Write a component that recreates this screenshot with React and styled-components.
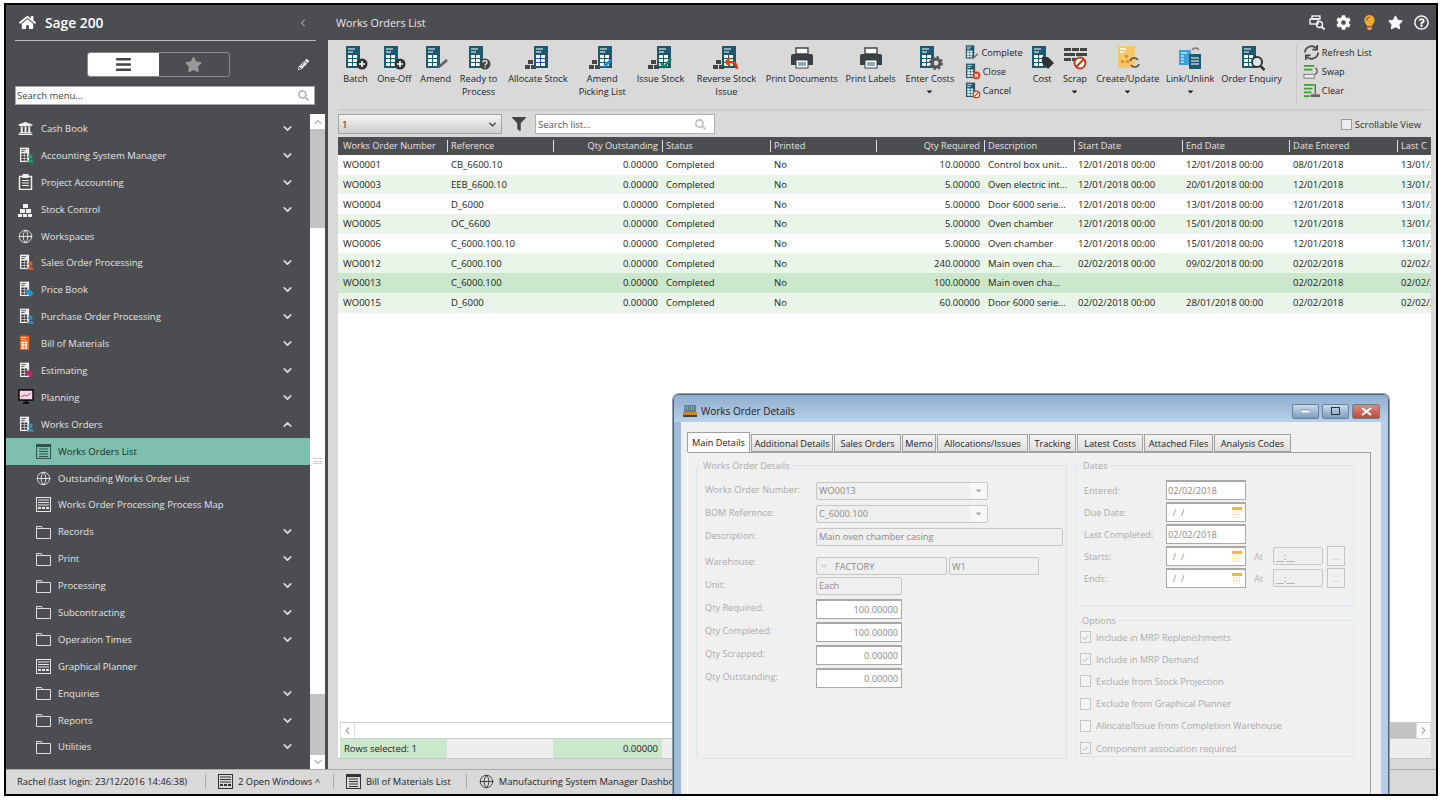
import React from "react";
import styled, { createGlobalStyle } from "styled-components";
import { ChevronDown, ChevronUp, ChevronLeft, ChevronRight, Globe, Check } from "lucide-react";
import { FaHome, FaBars, FaStar, FaPencilAlt, FaSearch, FaFilter, FaCog, FaLightbulb, FaRegQuestionCircle, FaUniversity, FaCaretDown } from "react-icons/fa";

const GlobalStyle = createGlobalStyle`
	html, body {
		margin: 0;
		padding: 0;
		background: #fff;
	}
	* {
		box-sizing: border-box;
	}
	body {
		font-family: "Open Sans", "Liberation Sans", sans-serif;
		font-size: 9.5px;
		overflow: hidden;
	}
`;

const Frame = styled.div`
	position: relative;
	width: 1434px;
	height: 793px;
	margin: 3px 0 0 4px;
	border: 2px solid #000;
	overflow: hidden;
	display: flex;
	flex-direction: column;
	background: #d9d9d9;
`;

const Upper = styled.div`
	display: flex;
	height: 764px;
`;

/* ---------- icons ---------- */

const Badge = ({ type }) => {
	switch (type) {
		case "plus":
			return (
				<g>
					<circle cx="19" cy="19" r="5.5" fill="#333" />
					<path d="M19 16v6M16 19h6" stroke="#fff" strokeWidth="1.6" />
				</g>
			);
		case "pencil":
			return <path d="M15 23l1-3 7-6 2 2-7 6z" fill="#666" />;
		case "question":
			return (
				<g>
					<circle cx="19" cy="19" r="5.5" fill="#444" />
					<path d="M17 17.5c0-2.4 4-2.4 4 0 0 1.6-2 1.4-2 3M19 21.5v1.3" stroke="#fff" strokeWidth="1.2" fill="none" />
				</g>
			);
		case "gear":
			return (
				<g>
					<circle cx="19" cy="18" r="4" fill="none" stroke="#555" strokeWidth="3" />
					<circle cx="19" cy="18" r="6" fill="none" stroke="#555" strokeWidth="2" strokeDasharray="2.4 2.3" />
				</g>
			);
		case "tag":
			return <path d="M13 12h6l6 6-6 6-6-6z" fill="#333" />;
		case "x":
			return (
				<g>
					<circle cx="19" cy="19" r="6" fill="#d9431e" />
					<path d="M16.5 16.5l5 5M21.5 16.5l-5 5" stroke="#fff" strokeWidth="1.6" />
				</g>
			);
		case "no":
			return (
				<g>
					<circle cx="19" cy="19" r="5" fill="#fff" stroke="#d9431e" strokeWidth="2" />
					<path d="M15.5 22.5l7-7" stroke="#d9431e" strokeWidth="2" />
				</g>
			);
		case "check":
			return <path d="M13 19l3 3 7-7" fill="none" stroke="#666" strokeWidth="2" />;
		case "lens":
			return (
				<g>
					<circle cx="18" cy="17" r="5" fill="#dfe8ec" stroke="#333" strokeWidth="2" />
					<path d="M21.5 21l4 4" stroke="#333" strokeWidth="2.5" />
				</g>
			);
		default:
			return null;
	}
};

const Stock = ({ fill = "#444" }) => (
	<g fill={fill}>
		<rect x="0" y="20" width="5" height="4" />
		<rect x="6" y="20" width="5" height="4" />
		<rect x="3" y="15" width="5" height="4" />
	</g>
);

const Sheet = ({ badge, stock, extra, size = 26, page = "#1c5a73", cell = "#fff" }) => {
	const left = stock ? 9 : 3;
	return (
		<svg width={size} height={size} viewBox="0 0 26 26">
			{stock && <Stock />}
			<rect x={left} y="1" width="14" height="22" fill={page} />
			<path d={`M${left + 2} 4h7M${left + 2} 7h5`} stroke={cell} strokeWidth="1.2" />
			{[11, 15, 19].map((y) =>
				[2, 7].map((x) => <rect key={`${x}${y}`} x={left + x} y={y - 1} width="4" height="3" fill={cell} />)
			)}
			<Badge type={badge} />
			{extra}
		</svg>
	);
};

const Printer = () => (
	<svg width="26" height="26" viewBox="0 0 26 26">
		<path d="M7 3h12v6H7z" fill="#fff" stroke="#444" strokeWidth="1.4" />
		<path d="M2 11a2 2 0 012-2h18a2 2 0 012 2v9H2z" fill="#3a4046" />
		<rect x="7" y="15" width="12" height="8" fill="#fff" stroke="#3a4046" />
		<path d="M9 18h8M9 20h8" stroke="#1c5a73" strokeWidth="1.2" />
	</svg>
);

const ScrapIcon = () => (
	<svg width="26" height="26" viewBox="0 0 26 26">
		<g fill="#444">
			<rect x="2" y="3" width="7" height="3" />
			<rect x="10" y="3" width="7" height="3" />
			<rect x="18" y="3" width="7" height="3" />
			<rect x="2" y="8" width="11" height="3" />
			<rect x="14" y="8" width="11" height="3" />
			<rect x="2" y="13" width="7" height="3" />
			<rect x="10" y="13" width="7" height="3" />
		</g>
		<circle cx="18" cy="18" r="5.5" fill="#fff" stroke="#c8381a" strokeWidth="2" />
		<path d="M14 22l8-8" stroke="#c8381a" strokeWidth="2" />
	</svg>
);

const CreateIcon = () => (
	<svg width="26" height="26" viewBox="0 0 26 26">
		<rect x="3" y="1" width="17" height="22" fill="#f7c766" />
		<path d="M5 4h6M5 7h4" stroke="#fff" strokeWidth="1.4" />
		<g fill="#e8912a">
			<rect x="10" y="10" width="3" height="3" />
			<rect x="6" y="15" width="3" height="3" />
			<rect x="11" y="15" width="3" height="3" />
		</g>
		<path d="M15 16a4.500 4.500 0 018-1M24 19a4.500 4.500 0 01-8 1" fill="none" stroke="#555" strokeWidth="1.6" />
	</svg>
);

const LinkIcon = () => (
	<svg width="26" height="26" viewBox="0 0 26 26">
		<rect x="2" y="5" width="12" height="15" fill="#3aa3dc" />
		<path d="M4 8h6M4 11h3M4 14h3M4 17h3" stroke="#fff" strokeWidth="1.2" />
		<rect x="12" y="9" width="12" height="15" fill="#1c5a73" />
		<path d="M14 13h8M14 16h8M14 19h8" stroke="#fff" strokeWidth="1.2" />
		<path d="M15 5a4 4 0 017 0" fill="none" stroke="#777" strokeWidth="1.4" />
	</svg>
);

const RefreshIcon = () => (
	<svg width="17" height="17" viewBox="0 0 18 18" fill="none" stroke="#444" strokeWidth="1.8">
		<path d="M2 9a7 7 0 0112-4.500M16 9a7 7 0 01-12 4.500" />
		<path d="M15 1v5h-5M3 17v-5h5" />
	</svg>
);

const SwapIcon = () => (
	<svg width="17" height="17" viewBox="0 0 18 18">
		<path d="M1 3h11M1 7h9" stroke="#3aa52b" strokeWidth="2" />
		<rect x="1" y="12" width="11" height="4" fill="#eee" stroke="#777" />
		<path d="M13 5a4 4 0 010 7" fill="none" stroke="#555" strokeWidth="1.4" />
	</svg>
);

const ClearIcon = () => (
	<svg width="17" height="17" viewBox="0 0 18 18">
		<path d="M1 3h11M1 7h9M1 11h8" stroke="#3aa52b" strokeWidth="2" />
		<path d="M13 2v11" stroke="#666" strokeWidth="1.5" />
		<rect x="8" y="13" width="10" height="3" fill="#666" />
		<path d="M1 15h6" stroke="#3aa52b" strokeWidth="2" />
	</svg>
);

const Folder = () => (
	<svg width="15" height="14" viewBox="0 0 15 14" fill="none" stroke="#ddd" strokeWidth="1">
		<path d="M.5 13.500V1.500h5l1 2h8v10z" />
		<path d="M.5 3.500h6" />
	</svg>
);

const Blocks = () => (
	<svg width="15" height="15" viewBox="0 0 15 15" fill="#f2f2f2">
		<rect x="5" y="2" width="5" height="4" />
		<rect x="2" y="7" width="5" height="4" />
		<rect x="8" y="7" width="5" height="4" />
		<rect x="0" y="12" width="4" height="3" />
		<rect x="5" y="12" width="4" height="3" />
		<rect x="10" y="12" width="4" height="3" />
	</svg>
);

const Clipboard = () => (
	<svg width="15" height="16" viewBox="0 0 15 16" fill="none" stroke="#eee">
		<rect x="1.500" y="2.500" width="12" height="13" strokeWidth="1.500" />
		<rect x="5" y=".5" width="5" height="3" fill="#eee" />
		<path d="M4 6.500h7M4 9h7M4 11.500h7" />
	</svg>
);

const Monitor = () => (
	<svg width="16" height="16" viewBox="0 0 16 16">
		<rect x="1" y="1" width="14" height="10" fill="#f6d9e4" stroke="#000" strokeWidth="1.4" />
		<path d="M3 8l3-2 3 1 4-3" stroke="#d0457f" fill="none" />
		<path d="M5 14h6M8 11v3" stroke="#000" strokeWidth="1.4" />
	</svg>
);

const PlannerIcon = ({ color = "#e6e6e6" }) => (
	<svg width="15" height="15" viewBox="0 0 15 15">
		<rect x=".5" y=".5" width="14" height="14" fill="none" stroke={color} />
		<path d="M2 3h11M2 5.500h11M2 8h11" stroke={color} />
		<path d="M2 11h3M6 11h3M10 11h3" stroke={color} strokeWidth="2" />
	</svg>
);

const ListIcon = ({ color = "#33524a" }) => (
	<svg width="15" height="15" viewBox="0 0 15 15">
		<rect x=".5" y=".5" width="14" height="14" fill="none" stroke={color} />
		<rect x="1" y="1" width="13" height="2" fill={color} />
		<path d="M3 5h9M3 7.500h9M3 10h9M3 12.500h9" stroke={color} />
	</svg>
);

const Person = ({ color }) => (
	<g fill={color}>
		<circle cx="19" cy="15" r="3.500" />
		<path d="M14 24c0-6 10-6 10 0z" />
	</g>
);

const TagMark = ({ color }) => <path d="M12 13h6l6 6-5 5-7-6z" fill={color} />;

const sideSheet = (extra) => <Sheet size={17} page="#eee" cell="#333" extra={extra} />;

const Calendar = () => (
	<svg width="10" height="11" viewBox="0 0 10 11">
		<rect x="0" y="0" width="10" height="3" fill="#f7b733" />
		<path d="M1 5h8M1 7.500h8M1 10h8" stroke="#f3cf8a" strokeDasharray="1.500 1.200" />
	</svg>
);

const WindowIcon = () => (
	<svg width="14" height="14" viewBox="0 0 14 14">
		<rect x="1" y="1" width="12" height="7" fill="#5a7f96" />
		<path d="M2 3h10M2 5h10" stroke="#9fd0c4" strokeDasharray="1 1" />
		<rect x="0" y="8" width="14" height="5" fill="#d0862a" />
		<rect x="0" y="11" width="14" height="2" fill="#444" />
	</svg>
);

/* ---------- sidebar ---------- */

const Sidebar = styled.aside`
	width: 322px;
	flex-shrink: 0;
	background: #4c4d51;
	display: flex;
	flex-direction: column;
	padding-right: 3px;
`;

const Brand = styled.div`
	height: 36px;
	margin: 0 9px;
	border-bottom: 1px solid #b9b9b9;
	display: flex;
	align-items: center;
	padding-left: 4px;
	color: #fff;
`;

const BrandName = styled.span`
	font-size: 13.8px;
	font-weight: 600;
	margin-left: 9px;
	flex: 1;
`;

const CollapseButton = styled.span`
	display: flex;
	margin-right: 7px;
	color: #ccc;
`;

const ViewRow = styled.div`
	display: flex;
	align-items: center;
	height: 26px;
	margin-top: 10px;
	padding-left: 81px;
`;

const ViewToggle = styled.div`
	width: 143px;
	height: 25px;
	display: flex;
	border: 1px solid #8a8a8a;
	border-radius: 3px;
	overflow: hidden;
`;

const ViewOption = styled.div`
	width: 71px;
	display: flex;
	align-items: center;
	justify-content: center;
	background: ${(p) => (p.$on ? "#fff" : "transparent")};
	color: ${(p) => (p.$on ? "#444" : "#999")};
	font-size: 17px;
`;

const EditButton = styled.div`
	margin-left: 68px;
	color: #e4e4e4;
	font-size: 11px;
	display: flex;
`;

const MenuSearch = styled.div`
	width: 300px;
	height: 19px;
	margin: 9px 0 0 9px;
	background: #fff;
	border: 1px solid #aaa;
	display: flex;
	align-items: center;
	justify-content: space-between;
	padding: 0 5px 0 1px;
	color: #444;
`;

const MenuWrap = styled.div`
	flex: 1;
	min-height: 0;
	display: flex;
	margin-top: 9px;
`;

const MenuList = styled.nav`
	width: 304px;
	overflow: hidden;
	padding-top: 1px;
`;

const MenuRow = styled.div`
	height: 26.9px;
	display: flex;
	align-items: center;
	padding-left: ${(p) => (p.$child ? "30px" : "12px")};
	color: ${(p) => (p.$active ? "#1d2b27" : "#e4e4e4")};
	background: ${(p) => (p.$active ? "#7fbfae" : "transparent")};
`;

const MenuIcon = styled.span`
	width: ${(p) => (p.$child ? "22px" : "23px")};
	display: flex;
	align-items: center;
	flex-shrink: 0;
`;

const MenuLabel = styled.span`
	flex: 1;
`;

const MenuChevron = styled.span`
	width: 29px;
	display: flex;
	color: #ddd;
`;

const SideScroll = styled.div`
	width: 15px;
	display: flex;
	flex-direction: column;
	background: #fff;
`;

const ScrollArrow = styled.div`
	height: ${(p) => p.$h}px;
	display: flex;
	align-items: center;
	justify-content: center;
	color: #bbb;
`;

const ScrollThumb = styled.div`
	height: ${(p) => p.$h}px;
	background: #c3c3c3;
`;

const ScrollTrack = styled.div`
	flex: 1;
	display: flex;
	align-items: center;
	justify-content: center;
`;

const Grip = styled.div`
	width: 9px;
	height: 6px;
	border-top: 1px solid #ccc;
	border-bottom: 1px solid #ccc;
	background: linear-gradient(#ccc, #ccc) center / 100% 1px no-repeat;
`;

const menu = [
	{ label: "Cash Book", icon: <FaUniversity size={15} color="#f2f2f2" />, chev: "down" },
	{ label: "Accounting System Manager", icon: sideSheet(<Person color="#1f9d6b" />), chev: "down" },
	{ label: "Project Accounting", icon: <Clipboard />, chev: "down" },
	{ label: "Stock Control", icon: <Blocks />, chev: "down" },
	{ label: "Workspaces", icon: <Globe size={15} color="#eee" strokeWidth={1.4} /> },
	{ label: "Sales Order Processing", icon: sideSheet(<Person color="#e8591c" />), chev: "down" },
	{ label: "Price Book", icon: sideSheet(<TagMark color="#1b9ad6" />), chev: "down" },
	{ label: "Purchase Order Processing", icon: sideSheet(<Person color="#2b8fd0" />), chev: "down" },
	{ label: "Bill of Materials", icon: <Sheet size={17} page="#ec6a2b" cell="#fff" />, chev: "down" },
	{ label: "Estimating", icon: sideSheet(<TagMark color="#c4256c" />), chev: "down" },
	{ label: "Planning", icon: <Monitor />, chev: "down" },
	{ label: "Works Orders", icon: sideSheet(<Person color="#3c8fb5" />), chev: "up" },
	{ label: "Works Orders List", icon: <ListIcon />, child: true, active: true },
	{ label: "Outstanding Works Order List", icon: <Globe size={15} color="#eee" strokeWidth={1.4} />, child: true },
	{ label: "Works Order Processing Process Map", icon: <PlannerIcon />, child: true },
	{ label: "Records", icon: <Folder />, child: true, chev: "down" },
	{ label: "Print", icon: <Folder />, child: true, chev: "down" },
	{ label: "Processing", icon: <Folder />, child: true, chev: "down" },
	{ label: "Subcontracting", icon: <Folder />, child: true, chev: "down" },
	{ label: "Operation Times", icon: <Folder />, child: true, chev: "down" },
	{ label: "Graphical Planner", icon: <PlannerIcon />, child: true },
	{ label: "Enquiries", icon: <Folder />, child: true, chev: "down" },
	{ label: "Reports", icon: <Folder />, child: true, chev: "down" },
	{ label: "Utilities", icon: <Folder />, child: true, chev: "down" },
];

/* ---------- main area ---------- */

const Main = styled.main`
	flex: 1;
	min-width: 0;
	display: flex;
	flex-direction: column;
`;

const TitleBar = styled.header`
	height: 35px;
	flex-shrink: 0;
	background: #4c4d51;
	color: #e8e8e8;
	display: flex;
	align-items: center;
	padding: 0 7px 0 8px;
	font-size: 10.8px;
`;

const TitleText = styled.div`
	flex: 1;
`;

const TitleIcons = styled.div`
	display: flex;
	align-items: center;
	gap: 11px;
	color: #fff;
	font-size: 15px;
`;

const Toolbar = styled.div`
	height: 71px;
	flex-shrink: 0;
	margin: 0 5px 0 10px;
	padding: 4px 0 0 5px;
	border-bottom: 2px solid #cdcdcd;
	display: flex;
	gap: 8.35px;
	color: #222;
	font-size: 9.2px;
`;

const ToolButton = styled.div`
	width: ${(p) => p.$w}px;
	flex-shrink: 0;
	display: flex;
	flex-direction: column;
	align-items: center;
	text-align: center;
	white-space: nowrap;
	line-height: 13px;
`;

const ToolIcon = styled.div`
	height: 27px;
	margin-bottom: 1px;
	display: flex;
	align-items: center;
`;

const ToolCaret = styled.div`
	font-size: 9px;
	margin-top: 2px;
	color: #222;
	display: flex;
`;

const ToolStack = styled.div`
	width: ${(p) => p.$w}px;
	flex-shrink: 0;
	display: flex;
	flex-direction: column;
	gap: 2px;
	border-left: ${(p) => (p.$divided ? "1px solid #c8c8c8" : "none")};
	padding-left: ${(p) => (p.$divided ? "6px" : "0")};
	margin-left: ${(p) => (p.$divided ? "6px" : "0")};
	height: 60px;
`;

const StackRow = styled.div`
	height: 17px;
	display: flex;
	align-items: center;
	gap: 2px;
	white-space: nowrap;
`;

const FilterRow = styled.div`
	height: 24px;
	margin: 1px 7px 0 10px;
	display: flex;
	align-items: center;
	flex-shrink: 0;
`;

const ListSelect = styled.div`
	width: 164px;
	height: 20px;
	border: 1px solid #a5a5a5;
	background: linear-gradient(#f4f4f4, #d0d0d0 90%);
	display: flex;
	align-items: center;
	justify-content: space-between;
	padding: 0 3px;
	color: #222;
`;

const FilterBtn = styled.div`
	width: 33px;
	display: flex;
	justify-content: center;
	font-size: 14px;
	color: #444;
`;

const ListSearch = styled.div`
	width: 180px;
	height: 20px;
	background: #fff;
	border: 1px solid #b0b0b0;
	display: flex;
	align-items: center;
	justify-content: space-between;
	padding: 0 8px 0 2px;
	color: #555;
`;

const ScrollableToggle = styled.label`
	margin-left: auto;
	margin-right: 8px;
	display: flex;
	align-items: center;
	gap: 3px;
	color: #333;
`;

const TinyBox = styled.span`
	width: 11px;
	height: 11px;
	border: 1px solid #999;
	background: #eee;
`;

const columns = "109px 106px 109px 108px 106px 108px 90px 108px 107px 108px 1fr";

const Table = styled.section`
	width: 1093px;
	height: 622px;
	margin: 1px 0 0 10px;
	background: #fff;
	display: flex;
	flex-direction: column;
	overflow: hidden;
	border-bottom: 1px solid #c4c4c4;
`;

const HeadRow = styled.div`
	height: 18px;
	flex-shrink: 0;
	display: grid;
	grid-template-columns: ${columns};
	background: #4c4d51;
	color: #e4e4e4;
	align-items: center;
	font-size: 9.2px;
`;

const HeadCell = styled.div`
	height: 12px;
	line-height: 12px;
	padding: 0 4px 0 ${(p) => (p.$first ? "5px" : "3px")};
	border-left: ${(p) => (p.$first ? "none" : "1px solid #ddd")};
	text-align: ${(p) => (p.$right ? "right" : "left")};
	white-space: nowrap;
	overflow: hidden;
`;

const BodyRow = styled.div`
	height: 19.7px;
	flex-shrink: 0;
	display: grid;
	grid-template-columns: ${columns};
	align-items: center;
	color: #222;
	background: ${(p) => (p.$selected ? "#cbe8cc" : p.$alt ? "#e8f5e8" : "#fff")};
`;

const BodyCell = styled.div`
	padding: 0 4px 0 ${(p) => (p.$first ? "5px" : "4px")};
	text-align: ${(p) => (p.$right ? "right" : "left")};
	white-space: nowrap;
	overflow: hidden;
`;

const TableSpace = styled.div`
	flex: 1;
`;

const HScroll = styled.div`
	height: 16px;
	flex-shrink: 0;
	margin-left: 2px;
	display: flex;
	align-items: stretch;
	border-top: 1px solid #ccc;
	color: #aaa;
`;

const HArrow = styled.div`
	width: 15px;
	display: flex;
	align-items: center;
	justify-content: center;
	border-right: 1px solid #ddd;
	border-left: 1px solid #ddd;
`;

const HTrack = styled.div`
	flex: 1;
	background: #fff;
`;

const HThumb = styled.div`
	width: 400px;
	background: #c3c3c3;
`;

const FootRow = styled.div`
	height: 20px;
	flex-shrink: 0;
	margin-left: 2px;
	display: grid;
	grid-template-columns: 107px 106px 109px 1fr;
	background: #eee;
	border-top: 1px solid #ccc;
	align-items: stretch;
	color: #222;
`;

const FootCell = styled.div`
	display: flex;
	align-items: center;
	justify-content: ${(p) => (p.$right ? "flex-end" : "flex-start")};
	padding: 0 4px;
	background: ${(p) => (p.$green ? "#cbe8cc" : "transparent")};
`;

/* ---------- status bar ---------- */

const StatusBar = styled.footer`
	height: 25px;
	flex-shrink: 0;
	background: #d9d9d9;
	border-top: 1px solid #aaa;
	display: flex;
	align-items: center;
	padding: 0 0 2px 11px;
	color: #222;
	white-space: nowrap;
	font-size: 9.4px;
`;

const StatusItem = styled.div`
	display: flex;
	align-items: center;
	gap: 5px;
	height: 15px;
	padding-right: ${(p) => p.$pr}px;
	margin-right: 12px;
	border-right: ${(p) => (p.$last ? "none" : "1px solid #aaa")};
`;

/* ---------- dialog ---------- */

const Dialog = styled.div`
	position: absolute;
	left: 667px;
	top: 389px;
	width: 716px;
	height: 412px;
	border: 1px solid #56606a;
	border-radius: 6px 6px 0 0;
	background: linear-gradient(90deg, #9dbbda, #c4d9ee 15%, #b5cde6 100%);
	padding: 0 7px;
	display: flex;
	flex-direction: column;
	box-shadow: 0 0 0 1px #8aa0b5;
`;

const DialogTitle = styled.div`
	height: 27px;
	flex-shrink: 0;
	margin: 0 -7px;
	padding: 5px 8px 0 9px;
	display: flex;
	align-items: center;
	gap: 4px;
	color: #222;
	font-size: 10px;
	background: linear-gradient(#8faed0, #b9d0e8);
	border-radius: 5px 5px 0 0;
`;

const DialogName = styled.div`
	flex: 1;
`;

const WinButtons = styled.div`
	display: flex;
	gap: 3px;
`;

const WinButton = styled.div`
	width: ${(p) => p.$w}px;
	height: 15px;
	border: 1px solid #6d7f92;
	border-radius: 2px;
	display: flex;
	align-items: center;
	justify-content: center;
	background: ${(p) =>
		p.$close ? "linear-gradient(#d98a7c, #bd4a37)" : "linear-gradient(#c9dbee, #7f9cbc)"};
`;

const Client = styled.div`
	flex: 1;
	background: #f0f0f0;
	padding: 11px 10px 0 6px;
	display: flex;
	flex-direction: column;
	min-height: 0;
	font-size: 9.2px;
`;

const Tabs = styled.div`
	display: flex;
	gap: 1px;
	height: 19px;
	flex-shrink: 0;
	position: relative;
	z-index: 1;
`;

const Tab = styled.div`
	width: ${(p) => p.$w}px;
	height: ${(p) => (p.$on ? "20px" : "18px")};
	margin-top: ${(p) => (p.$on ? "-1px" : "1px")};
	display: flex;
	align-items: center;
	justify-content: center;
	color: #222;
	white-space: nowrap;
	background: ${(p) => (p.$on ? "#fff" : "linear-gradient(#f4f4f4, #dedede)")};
	border: 1px solid #a0a0a0;
	border-bottom: ${(p) => (p.$on ? "none" : "1px solid #a0a0a0")};
`;

const TabPanel = styled.div`
	flex: 1;
	min-height: 0;
	border-top: 1px solid #a0a0a0;
	border-right: 1px solid #a0a0a0;
	border-left: 1px solid #fff;
	padding: 6px 0 0 8px;
	display: flex;
	gap: 8px;
	color: #aaa;
`;

const Col = styled.div`
	display: flex;
	flex-direction: column;
	width: ${(p) => p.$w}px;
	gap: ${(p) => p.$gap || 0}px;
`;

const Group = styled.fieldset`
	margin: 0;
	padding: ${(p) => p.$pad};
	height: ${(p) => p.$h}px;
	min-width: 0;
	border: 1px solid #dde5ec;
	border-radius: 3px;
`;

const GroupTitle = styled.legend`
	padding: 0 2px;
	margin-left: ${(p) => p.$ml}px;
	margin-bottom: ${(p) => p.$mb || 0}px;
	line-height: 13px;
	color: #aaa;
`;

const FormRow = styled.div`
	height: ${(p) => p.$h || 23}px;
	margin-top: ${(p) => p.$mt || 0}px;
	display: flex;
	align-items: center;
`;

const FormLabel = styled.div`
	width: ${(p) => p.$w}px;
	flex-shrink: 0;
	color: #ababab;
	margin-bottom: 3px;
`;

const DateLabel = styled(FormLabel)`
	margin-bottom: 0;
`;

const ReadBox = styled.div`
	width: ${(p) => p.$w}px;
	height: 18px;
	border: 1px solid #c6c6c6;
	border-radius: 2px;
	padding: 0 2px;
	display: flex;
	align-items: center;
	justify-content: space-between;
	color: #8a8a8a;
	background: #efefef;
	flex-shrink: 0;
`;

const WarehouseBox = styled(ReadBox)`
	margin: 7px 0 0 ${(p) => p.$gapLeft || 0}px;
`;

const WarehouseName = styled.span`
	flex: 1;
	padding-left: 6px;
`;

const ComboCaret = styled.span`
	width: 17px;
	align-self: stretch;
	display: flex;
	align-items: center;
	justify-content: center;
	background: #f7f7f7;
	color: #aaa;
	margin-right: -2px;
`;

const WhiteBox = styled.div`
	width: ${(p) => p.$w}px;
	height: 20px;
	background: #fff;
	border: 1px solid #a8a8a8;
	border-top-width: 2px;
	padding: 0 3px 0 1px;
	display: flex;
	align-items: center;
	justify-content: ${(p) => (p.$right ? "flex-end" : "space-between")};
	color: #8a8a8a;
	flex-shrink: 0;
`;

const AtLabel = styled.span`
	width: 27px;
	padding-left: 8px;
	color: #b5b5b5;
	flex-shrink: 0;
`;

const DotsBtn = styled.div`
	width: 24px;
	height: 20px;
	margin-left: 4px;
	border: 1px solid #c4c4c4;
	display: flex;
	align-items: center;
	justify-content: center;
	color: #bbb;
`;

const OptionRow = styled.div`
	height: 22.2px;
	display: flex;
	align-items: center;
	gap: 5px;
	color: #ababab;
`;

const OptionBox = styled.span`
	width: 11px;
	height: 12px;
	border: 1px solid #c6c6c6;
	background: #f4f4f4;
	display: flex;
	align-items: center;
	justify-content: center;
	color: #a0a0a0;
`;

/* ---------- data ---------- */

const tools = [
	{ w: 25, label: ["Batch"], icon: <Sheet badge="plus" /> },
	{ w: 36, label: ["One-Off"], icon: <Sheet badge="plus" /> },
	{ w: 30, label: ["Amend"], icon: <Sheet badge="pencil" /> },
	{ w: 39, label: ["Ready to", "Process"], icon: <Sheet badge="question" /> },
	{ w: 63, label: ["Allocate Stock"], icon: <Sheet stock /> },
	{ w: 49, label: ["Amend", "Picking List"], icon: <Sheet stock extra={<path d="M14 23l1-3 6-6 2 2-6 6z" fill="#1f8fd0" />} /> },
	{ w: 51, label: ["Issue Stock"], icon: <Sheet stock extra={<path d="M13 18l3 4 7-8" fill="none" stroke="#12855f" strokeWidth="2.400" />} /> },
	{ w: 64, label: ["Reverse Stock", "Issue"], icon: <Sheet stock extra={<path d="M24 24c0-6-3-7-10-7M17 13l-4 4 4 4" fill="none" stroke="#d9431e" strokeWidth="2.400" />} /> },
	{ w: 70, label: ["Print Documents"], icon: <Printer /> },
	{ w: 51, label: ["Print Labels"], icon: <Printer /> },
	{ w: 51, label: ["Enter Costs"], icon: <Sheet badge="gear" />, caret: true },
	{
		stack: true,
		w: 59,
		items: [
			{ label: "Complete", icon: <Sheet size={17} badge="check" /> },
			{ label: "Close", icon: <Sheet size={17} badge="x" /> },
			{ label: "Cancel", icon: <Sheet size={17} badge="no" /> },
		],
	},
	{ w: 22, label: ["Cost"], icon: <Sheet badge="tag" /> },
	{ w: 27, label: ["Scrap"], icon: <ScrapIcon />, caret: true },
	{ w: 62, label: ["Create/Update"], icon: <CreateIcon />, caret: true },
	{ w: 46, label: ["Link/Unlink"], icon: <LinkIcon />, caret: true },
	{ w: 60, label: ["Order Enquiry"], icon: <Sheet badge="lens" /> },
	{
		stack: true,
		divided: true,
		w: 110,
		items: [
			{ label: "Refresh List", icon: <RefreshIcon /> },
			{ label: "Swap", icon: <SwapIcon /> },
			{ label: "Clear", icon: <ClearIcon /> },
		],
	},
];

const heads = [
	"Works Order Number",
	"Reference",
	"Qty Outstanding",
	"Status",
	"Printed",
	"Qty Required",
	"Description",
	"Start Date",
	"End Date",
	"Date Entered",
	"Last C",
];
const rightCols = [2, 5];

const rows = [
	["WO0001", "CB_6600.10", "0.00000", "Completed", "No", "10.00000", "Control box unit...", "12/01/2018 00:00", "12/01/2018 00:00", "08/01/2018", "13/01/2018"],
	["WO0003", "EEB_6600.10", "0.00000", "Completed", "No", "5.00000", "Oven electric int...", "12/01/2018 00:00", "20/01/2018 00:00", "12/01/2018", "13/01/2018"],
	["WO0004", "D_6000", "0.00000", "Completed", "No", "5.00000", "Door 6000 serie...", "12/01/2018 00:00", "13/01/2018 00:00", "12/01/2018", "13/01/2018"],
	["WO0005", "OC_6600", "0.00000", "Completed", "No", "5.00000", "Oven chamber", "12/01/2018 00:00", "15/01/2018 00:00", "12/01/2018", "13/01/2018"],
	["WO0006", "C_6000.100.10", "0.00000", "Completed", "No", "5.00000", "Oven chamber", "12/01/2018 00:00", "15/01/2018 00:00", "12/01/2018", "13/01/2018"],
	["WO0012", "C_6000.100", "0.00000", "Completed", "No", "240.00000", "Main oven cha...", "02/02/2018 00:00", "09/02/2018 00:00", "02/02/2018", "02/02/2018"],
	["WO0013", "C_6000.100", "0.00000", "Completed", "No", "100.00000", "Main oven cha...", "", "", "02/02/2018", "02/02/2018"],
	["WO0015", "D_6000", "0.00000", "Completed", "No", "60.00000", "Door 6000 serie...", "02/02/2018 00:00", "28/01/2018 00:00", "02/02/2018", "02/02/2018"],
];

const tabs = [
	["Main Details", 63],
	["Additional Details", 82],
	["Sales Orders", 67],
	["Memo", 34],
	["Allocations/Issues", 91],
	["Tracking", 47],
	["Latest Costs", 66],
	["Attached Files", 69],
	["Analysis Codes", 77],
];

const qtys = [
	["Qty Required:", "100.00000"],
	["Qty Completed:", "100.00000"],
	["Qty Scrapped:", "0.00000"],
	["Qty Outstanding:", "0.00000"],
];

const blankDate = "\u00a0\u00a0/\u00a0\u00a0/";

const dates = [
	{ label: "Entered:", value: "02/02/2018" },
	{ label: "Due Date:", value: blankDate, pick: true },
	{ label: "Last Completed:", value: "02/02/2018" },
	{ label: "Starts:", value: blankDate, pick: true, time: true },
	{ label: "Ends:", value: blankDate, pick: true, time: true },
];

const options = [
	["Include in MRP Replenishments", true],
	["Include in MRP Demand", true],
	["Exclude from Stock Projection", false],
	["Exclude from Graphical Planner", false],
	["Allocate/Issue from Completion Warehouse", false],
	["Component association required", true],
];

const ReportSearch = () => (
	<svg width="16" height="15" viewBox="0 0 16 15" fill="none" stroke="#fff" strokeWidth="1.300">
		<rect x="3" y="1" width="8" height="3" />
		<rect x="1" y="4" width="8" height="5" />
		<circle cx="10.500" cy="9.500" r="3" />
		<path d="M13 12l2.500 2.500" strokeWidth="1.800" />
	</svg>
);

const App = () => {
	return (
		<>
			<GlobalStyle />
			<Frame>
				<Upper>
					<Sidebar>
						<Brand>
							<FaHome size={17} />
							<BrandName>Sage 200</BrandName>
							<CollapseButton><ChevronLeft size={12} /></CollapseButton>
						</Brand>
						<ViewRow>
							<ViewToggle>
								<ViewOption $on><FaBars /></ViewOption>
								<ViewOption><FaStar /></ViewOption>
							</ViewToggle>
							<EditButton><FaPencilAlt /></EditButton>
						</ViewRow>
						<MenuSearch>
							Search menu...
							<FaSearch size={11} color="#bbb" />
						</MenuSearch>
						<MenuWrap>
							<MenuList>
								{menu.map((m) => (
									<MenuRow key={m.label} $child={m.child} $active={m.active}>
										<MenuIcon $child={m.child}>{m.icon}</MenuIcon>
										<MenuLabel>{m.label}</MenuLabel>
										<MenuChevron>
											{m.chev === "down" && <ChevronDown size={13} strokeWidth={3} />}
											{m.chev === "up" && <ChevronUp size={13} strokeWidth={3} />}
										</MenuChevron>
									</MenuRow>
								))}
							</MenuList>
							<SideScroll>
								<ScrollArrow $h={15}><ChevronUp size={12} strokeWidth={2.5} /></ScrollArrow>
								<ScrollThumb $h={99} />
								<ScrollTrack><Grip /></ScrollTrack>
								<ScrollThumb $h={61} />
								<ScrollArrow $h={14}><ChevronDown size={12} strokeWidth={2.5} /></ScrollArrow>
							</SideScroll>
						</MenuWrap>
					</Sidebar>

					<Main>
						<TitleBar>
							<TitleText>Works Orders List</TitleText>
							<TitleIcons>
								<ReportSearch />
								<FaCog />
								<FaLightbulb color="#f5a82a" />
								<FaStar />
								<FaRegQuestionCircle />
							</TitleIcons>
						</TitleBar>

						<Toolbar>
							{tools.map((t, i) =>
								t.stack ? (
									<ToolStack key={i} $w={t.w} $divided={t.divided}>
										{t.items.map((s) => (
											<StackRow key={s.label}>
												{s.icon}
												{s.label}
											</StackRow>
										))}
									</ToolStack>
								) : (
									<ToolButton key={i} $w={t.w}>
										<ToolIcon>{t.icon}</ToolIcon>
										{t.label.map((l) => (
											<div key={l}>{l}</div>
										))}
										{t.caret && (
											<ToolCaret><FaCaretDown /></ToolCaret>
										)}
									</ToolButton>
								)
							)}
						</Toolbar>

						<FilterRow>
							<ListSelect>
								1
								<ChevronDown size={11} strokeWidth={3} color="#333" />
							</ListSelect>
							<FilterBtn><FaFilter /></FilterBtn>
							<ListSearch>
								Search list...
								<FaSearch size={11} color="#c4c4c4" />
							</ListSearch>
							<ScrollableToggle>
								<TinyBox />
								Scrollable View
							</ScrollableToggle>
						</FilterRow>

						<Table>
							<HeadRow>
								{heads.map((h, i) => (
									<HeadCell key={h} $first={i === 0} $right={rightCols.includes(i)}>{h}</HeadCell>
								))}
							</HeadRow>
							{rows.map((r, i) => (
								<BodyRow key={r[0]} $alt={i % 2 === 1} $selected={r[0] === "WO0013"}>
									{r.map((c, j) => (
										<BodyCell key={j} $first={j === 0} $right={rightCols.includes(j)}>{c}</BodyCell>
									))}
								</BodyRow>
							))}
							<TableSpace />
							<HScroll>
								<HArrow><ChevronLeft size={11} strokeWidth={2.5} /></HArrow>
								<HTrack />
								<HThumb />
								<HArrow><ChevronRight size={11} strokeWidth={2.5} /></HArrow>
							</HScroll>
							<FootRow>
								<FootCell $green>Rows selected: 1</FootCell>
								<FootCell />
								<FootCell $green $right>0.00000</FootCell>
								<FootCell />
							</FootRow>
						</Table>
					</Main>
				</Upper>

				<StatusBar>
					<StatusItem $pr={18}>Rachel (last login: 23/12/2016 14:46:38)</StatusItem>
					<StatusItem $pr={13}>
						<PlannerIcon color="#333" />
						2 Open Windows ^
					</StatusItem>
					<StatusItem $pr={15}>
						<ListIcon color="#333" />
						Bill of Materials List
					</StatusItem>
					<StatusItem $last $pr={0}>
						<Globe size={15} color="#333" strokeWidth={1.4} />
						Manufacturing System Manager Dashboard
					</StatusItem>
				</StatusBar>

				<Dialog>
					<DialogTitle>
						<WindowIcon />
						<DialogName>Works Order Details</DialogName>
						<WinButtons>
							<WinButton $w={27}>
								<svg width="9" height="4"><rect width="9" height="3" y="1" fill="#fff" stroke="#456" strokeWidth=".5" /></svg>
							</WinButton>
							<WinButton $w={27}>
								<svg width="9" height="8"><rect x=".5" y=".5" width="8" height="7" fill="none" stroke="#234" /></svg>
							</WinButton>
							<WinButton $w={28} $close>
								<svg width="11" height="9"><path d="M1 1l9 7M10 1l-9 7" stroke="#fff" strokeWidth="2.200" /></svg>
							</WinButton>
						</WinButtons>
					</DialogTitle>
					<Client>
						<Tabs>
							{tabs.map(([name, w], i) => (
								<Tab key={name} $w={w} $on={i === 0}>{name}</Tab>
							))}
						</Tabs>
						<TabPanel>
							<Col $w={371}>
								<Group $pad="7px 8px 0" $h={300}>
									<GroupTitle $ml={-4}>Works Order Details</GroupTitle>
									<FormRow>
										<FormLabel $w={111}>Works Order Number:</FormLabel>
										<ReadBox $w={172}>WO0013<ComboCaret><FaCaretDown /></ComboCaret></ReadBox>
									</FormRow>
									<FormRow>
										<FormLabel $w={111}>BOM Reference:</FormLabel>
										<ReadBox $w={172}>C_6000.100<ComboCaret><FaCaretDown /></ComboCaret></ReadBox>
									</FormRow>
									<FormRow>
										<FormLabel $w={111}>Description:</FormLabel>
										<ReadBox $w={247}>Main oven chamber casing</ReadBox>
									</FormRow>
									<FormRow $mt={3}>
										<FormLabel $w={111}>Warehouse:</FormLabel>
										<WarehouseBox $w={131}>
											<ChevronDown size={10} color="#aaa" />
											<WarehouseName>FACTORY</WarehouseName>
										</WarehouseBox>
										<WarehouseBox $w={90} $gapLeft={2}>W1</WarehouseBox>
									</FormRow>
									<FormRow>
										<FormLabel $w={111}>Unit:</FormLabel>
										<ReadBox $w={86}>Each</ReadBox>
									</FormRow>
									{qtys.map(([l, v]) => (
										<FormRow key={l}>
											<FormLabel $w={111}>{l}</FormLabel>
											<WhiteBox $w={86} $right>{v}</WhiteBox>
										</FormRow>
									))}
								</Group>
							</Col>
							<Col $w={279} $gap={8}>
								<Group $pad="7px 8px 0" $h={147}>
									<GroupTitle $ml={-3}>Dates</GroupTitle>
									{dates.map((d) => (
										<FormRow key={d.label} $h={22}>
											<DateLabel $w={82}>{d.label}</DateLabel>
											<WhiteBox $w={80}>
												{d.value}
												{d.pick && <Calendar />}
											</WhiteBox>
											{d.time && (
												<>
													<AtLabel>At</AtLabel>
													<ReadBox $w={50}>__:__</ReadBox>
													<DotsBtn>...</DotsBtn>
												</>
											)}
										</FormRow>
									))}
								</Group>
								<Group $pad="0 4px" $h={143}>
									<GroupTitle $ml={0} $mb={-1}>Options</GroupTitle>
									{options.map(([l, on]) => (
										<OptionRow key={l}>
											<OptionBox>{on && <Check size={9} strokeWidth={2} />}</OptionBox>
											{l}
										</OptionRow>
									))}
								</Group>
							</Col>
						</TabPanel>
					</Client>
				</Dialog>
			</Frame>
		</>
	);
};

export default App;
